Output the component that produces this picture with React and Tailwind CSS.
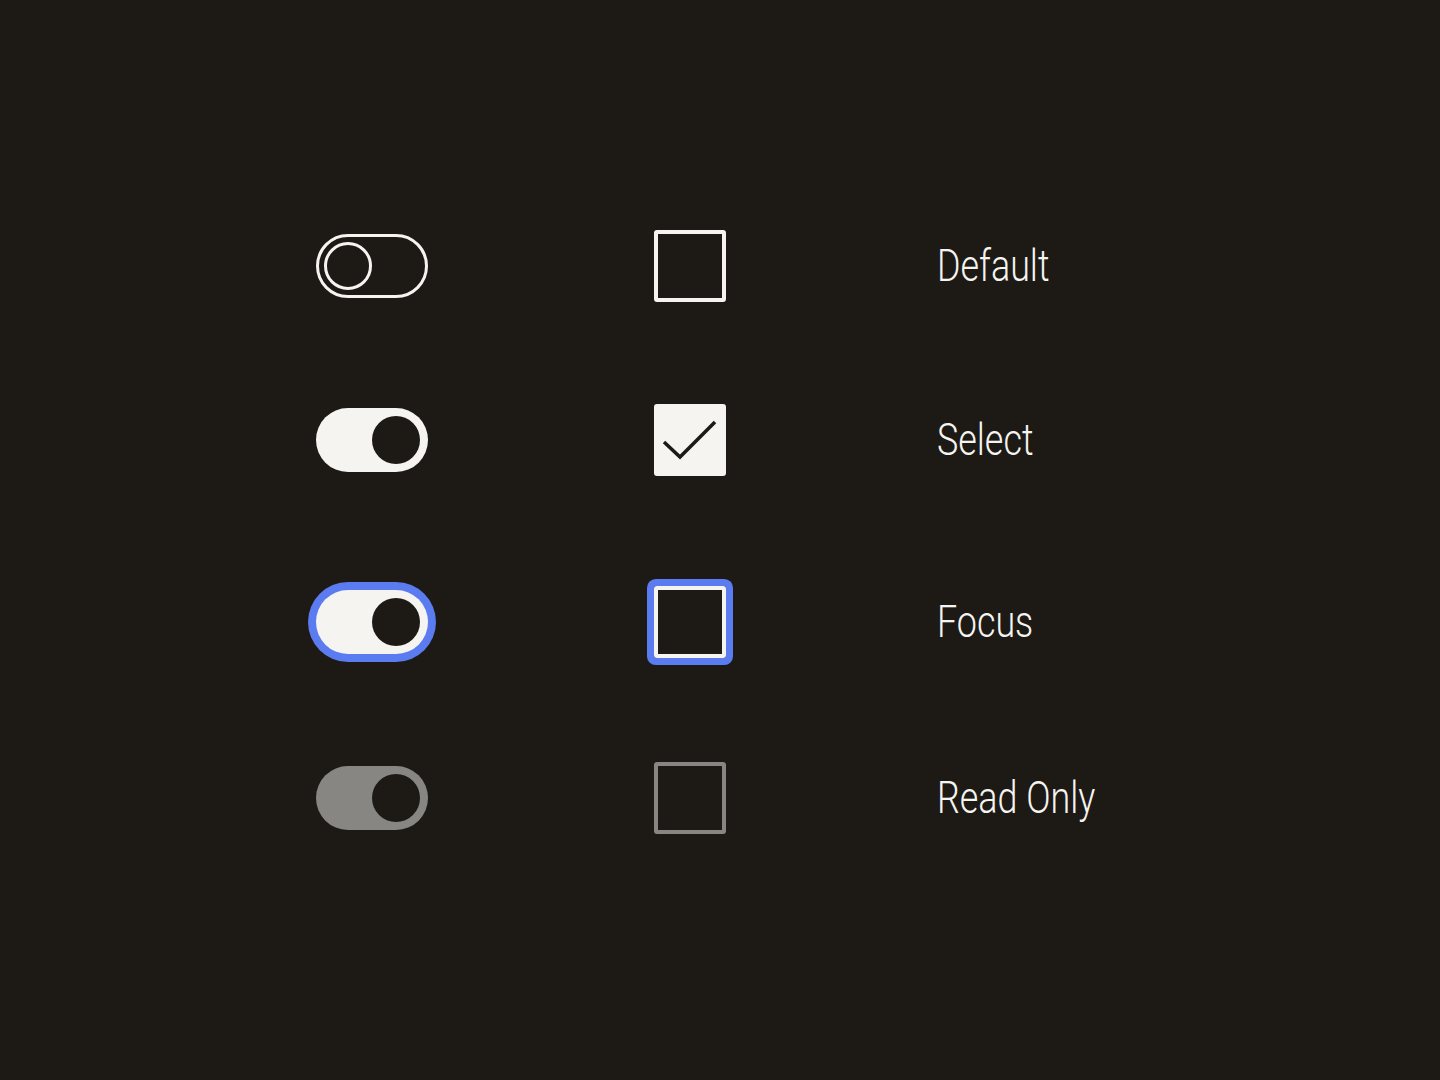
const rows = [
  { label: "Default", state: "default", mt: "mt-[226px]" },
  { label: "Select", state: "select", mt: "mt-[94px]" },
  { label: "Focus", state: "focus", mt: "mt-[102px]" },
  { label: "Read Only", state: "readonly", mt: "mt-[96px]" },
];

function Toggle({ state }) {
  if (state === "default") {
    return (
      <div className="w-[112px] h-[64px] rounded-full border-[3px] border-[#f5f4f0] flex items-center px-[5px]">
        <div className="w-[48px] h-[48px] rounded-full border-[3px] border-[#f5f4f0]" />
      </div>
    );
  }
  const track =
    state === "readonly"
      ? "bg-[#878682]"
      : state === "focus"
      ? "bg-[#f5f4f0] ring-[8px] ring-[#5b7cf0]"
      : "bg-[#f5f4f0]";
  return (
    <div className={`w-[112px] h-[64px] rounded-full flex items-center justify-end pr-[8px] ${track}`}>
      <div className="w-[48px] h-[48px] rounded-full bg-[#1d1a16]" />
    </div>
  );
}

function Checkbox({ state }) {
  if (state === "select") {
    return (
      <div className="w-[72px] h-[72px] rounded-[3px] bg-[#f5f4f0] flex items-center justify-center">
        <svg width="72" height="72" viewBox="0 0 72 72" fill="none">
          <path d="M10 38 L26 53 L61 18" stroke="#1d1a16" strokeWidth="3.5" />
        </svg>
      </div>
    );
  }
  const box =
    state === "readonly"
      ? "border-[#878682]"
      : state === "focus"
      ? "border-[#f5f4f0] ring-[7px] ring-[#5b7cf0]"
      : "border-[#f5f4f0]";
  return <div className={`w-[72px] h-[72px] rounded-[3px] border-[4px] ${box}`} />;
}

export default function App() {
  return (
    <div className="w-[1440px] h-[1080px] bg-[#1d1a16] overflow-hidden">
      {rows.map((row) => (
        <div key={row.label} className={`flex items-center h-[80px] ${row.mt}`}>
          <div className="ml-[316px] w-[112px] flex justify-center">
            <Toggle state={row.state} />
          </div>
          <div className="ml-[226px] w-[72px]">
            <Checkbox state={row.state} />
          </div>
          <div className="ml-[211px] text-[44px] font-light text-[#f5f4f0] leading-none font-['Roboto',sans-serif] scale-x-[0.815] origin-left whitespace-nowrap">
            {row.label}
          </div>
        </div>
      ))}
    </div>
  );
}
